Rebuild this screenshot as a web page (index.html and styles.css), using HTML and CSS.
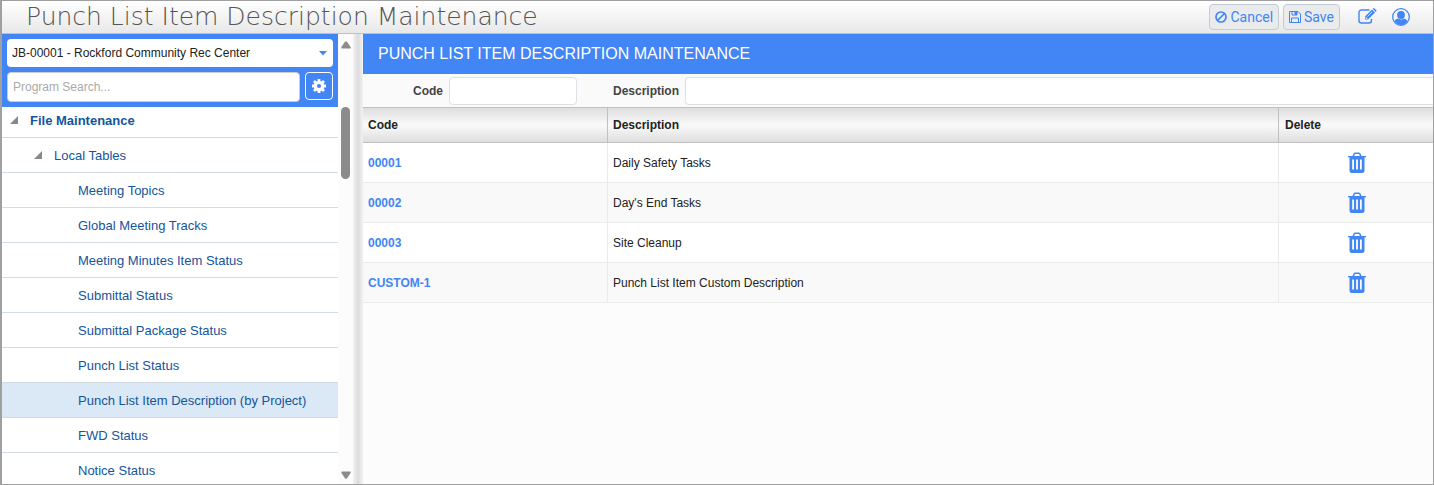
FILE: index.html
```html
<!DOCTYPE html>
<html lang="en">
<head>
    <meta charset="UTF-8">
    <meta name="viewport" content="width=device-width, initial-scale=1.0">
    <title>Punch List Item Description Maintenance</title>
    <link rel="stylesheet" href="styles.css">
</head>
<body>
    <svg class="sprite" aria-hidden="true">
        <symbol id="trash" viewBox="0 0 20 22">
            <path fill="currentColor" fill-rule="evenodd" d="M1 4h4.500l.8-2Q6.800.5 8 .5h4q1.200 0 1.700 1.500l.8 2H19v1.300h-1.500V18.500q0 2.500-2.500 2.500H5q-2.500 0-2.500-2.500V5.300H1zM7.200 4h5.600l-.7-1.900H7.900zM5.200 7.500v10h1.800v-10zM9.100 7.500v10h1.800v-10zM13 7.500v10h1.800v-10z"/>
        </symbol>
    </svg>

    <header class="topbar">
        <h1>Punch List Item Description Maintenance</h1>
        <div class="actions">
            <button class="btn">
                <svg width="12" height="12" viewBox="0 0 12 12" fill="none" stroke="currentColor" stroke-width="1.700"><circle cx="6" cy="6" r="5"/><path d="M9.500 2.500l-7 7"/></svg>
                Cancel
            </button>
            <button class="btn">
                <svg width="12" height="12" viewBox="0 0 12 12" fill="none" stroke="currentColor"><path d="M.5.5h8.500l2.500 2.500v8.500H.5zM2.500 11.500V7h7v4.500M3 .5v3.500h5V.5"/><path d="M6 1h1.500v2.500H6z" fill="currentColor"/></svg>
                Save
            </button>
            <button class="icon-btn edit" aria-label="Edit">
                <svg width="19" height="18" viewBox="0 0 19 18" fill="none" stroke="currentColor" stroke-width="1.400"><path d="M11.500 2H3.500Q1 2 1 4.500v8Q1 15 3.500 15H11q2.500 0 2.500-2.500V11"/><path d="M7 8.500L14 1.500l3 3L10 11.500H7z" fill="currentColor" stroke="none"/><path d="M14.700.8l.6-.5q.6-.5 1.200.1l1.700 1.700q.6.600.1 1.200l-.6.600z" fill="currentColor" stroke="none"/><path d="M9.500 8.500L14 4M8 9v1.500h1.500" stroke="#f4f4f4" stroke-width=".8"/></svg>
            </button>
            <button class="icon-btn" aria-label="Account">
                <svg width="18" height="18" viewBox="0 0 18 18"><circle cx="9" cy="9" r="8.300" fill="none" stroke="currentColor" stroke-width="1.300"/><ellipse cx="9" cy="7" rx="3.900" ry="4" fill="currentColor"/><path d="M2.500 13q1.200-2.300 3.700-2.400 2.800 2 5.600 0 2.500.1 3.700 2.400Q13.200 17 9 17t-6.500-4z" fill="currentColor"/></svg>
            </button>
        </div>
    </header>

    <div class="layout">
        <aside class="sidebar">
            <div class="picker">
                <div class="project">
                    <select aria-label="Project">
                        <option>JB-00001 - Rockford Community Rec Center</option>
                    </select>
                    <svg class="caret" width="8" height="5" viewBox="0 0 8 5"><path d="M0 0h8L4 4.500z" fill="#4285f4"/></svg>
                </div>
                <div class="search">
                    <input type="text" placeholder="Program Search..." aria-label="Program search">
                    <button class="gear" aria-label="Settings">
                        <svg width="14" height="14" viewBox="0 0 14 14"><circle cx="7" cy="7" r="3.700" fill="none" stroke="#fff" stroke-width="3.200"/><path d="M7 0v3M7 11v3M0 7h3M11 7h3M2 2l2.200 2.200M9.800 9.800L12 12M12 2L9.800 4.200M4.200 9.800L2 12" stroke="#fff" stroke-width="2.800"/></svg>
                    </button>
                </div>
            </div>
            <nav>
                <ul class="tree">
                    <li class="root"><a href="#"><i class="arrow"></i>File Maintenance</a></li>
                    <li class="group"><a href="#"><i class="arrow"></i>Local Tables</a></li>
                    <li><a href="#">Meeting Topics</a></li>
                    <li><a href="#">Global Meeting Tracks</a></li>
                    <li><a href="#">Meeting Minutes Item Status</a></li>
                    <li><a href="#">Submittal Status</a></li>
                    <li><a href="#">Submittal Package Status</a></li>
                    <li><a href="#">Punch List Status</a></li>
                    <li class="selected"><a href="#">Punch List Item Description (by Project)</a></li>
                    <li><a href="#">FWD Status</a></li>
                    <li><a href="#">Notice Status</a></li>
                </ul>
            </nav>
        </aside>
        <div class="scrollbar">
            <svg width="10" height="8" viewBox="0 0 10 8"><path d="M4 .8q1-1 2 0l3.600 5.200Q10 7.500 9 7.500H1Q0 7.500.4 6z" fill="#8b8b8b"/></svg>
            <div class="thumb"></div>
            <svg width="10" height="8" viewBox="0 0 10 8"><path d="M4 7.200q1 1 2 0L9.600 2Q10 .5 9 .5H1Q0 .5.4 2z" fill="#8b8b8b"/></svg>
        </div>
        <div class="splitter"></div>

        <main>
            <h2>PUNCH LIST ITEM DESCRIPTION MAINTENANCE</h2>
            <form class="filters">
                <label class="code-label" for="code">Code</label>
                <input type="text" id="code">
                <label class="desc-label" for="description">Description</label>
                <input type="text" id="description">
            </form>
            <table>
                <thead>
                    <tr><th class="col-code">Code</th><th>Description</th><th class="col-delete">Delete</th></tr>
                </thead>
                <tbody>
                    <tr>
                        <td><a href="#">00001</a></td><td>Daily Safety Tasks</td>
                        <td class="del"><button aria-label="Delete 00001"><svg width="20" height="22"><use href="#trash"/></svg></button></td>
                    </tr>
                    <tr>
                        <td><a href="#">00002</a></td><td>Day's End Tasks</td>
                        <td class="del"><button aria-label="Delete 00002"><svg width="20" height="22"><use href="#trash"/></svg></button></td>
                    </tr>
                    <tr>
                        <td><a href="#">00003</a></td><td>Site Cleanup</td>
                        <td class="del"><button aria-label="Delete 00003"><svg width="20" height="22"><use href="#trash"/></svg></button></td>
                    </tr>
                    <tr>
                        <td><a href="#">CUSTOM-1</a></td><td>Punch List Item Custom Description</td>
                        <td class="del"><button aria-label="Delete CUSTOM-1"><svg width="20" height="22"><use href="#trash"/></svg></button></td>
                    </tr>
                </tbody>
            </table>
        </main>
    </div>
</body>
</html>
```

FILE: styles.css
```css
* {
    box-sizing: border-box;
}
body {
    margin: 0;
    height: 100vh;
    display: flex;
    flex-direction: column;
    overflow: hidden;
    border: 1px solid #a0a0a0;
    border-left-width: 2px;
    background: #fcfcfc;
    color: #222;
    font-family: "Liberation Sans", Arial, sans-serif;
    font-size: 12px;
}
input, select, button {
    font-family: inherit;
    font-size: 12px;
}
a {
    text-decoration: none;
}
.sprite {
    display: none;
}

/* top bar */
.topbar {
    flex: none;
    display: flex;
    align-items: center;
    justify-content: space-between;
    height: 33px;
    padding: 0 23px 0 24px;
    border-bottom: 1px solid #c0c0c0;
    background: linear-gradient(#fff, #e8e8e8);
}
h1 {
    margin: 0;
    color: #555;
    font-family: "DejaVu Sans", sans-serif;
    font-size: 25px;
    font-weight: 200;
    line-height: 30px;
}
.actions {
    display: flex;
    align-items: center;
    gap: 4px;
}
.btn {
    display: flex;
    align-items: center;
    gap: 3px;
    height: 26px;
    padding: 0 5px;
    border: 1px solid #c3ccd5;
    border-radius: 4px;
    background: #e9ebed;
    color: #4285f4;
    font-family: Roboto, sans-serif;
    font-size: 14px;
}
.icon-btn {
    display: flex;
    padding: 0;
    border: none;
    background: none;
    color: #4285f4;
}
.edit {
    margin: 0 11px 0 14px;
}

/* sidebar */
.layout {
    flex: 1;
    display: flex;
    min-height: 0;
}
.sidebar {
    flex: none;
    width: 336px;
    overflow: hidden;
    background: #fff;
}
.picker {
    padding: 5px;
    background: #4285f4;
}
.project {
    position: relative;
    margin-bottom: 5px;
}
.project select {
    display: block;
    width: 100%;
    height: 28px;
    padding: 0 5px;
    border: none;
    border-radius: 4px;
    appearance: none;
    background: #fff;
    color: #222;
}
.caret {
    position: absolute;
    right: 6px;
    top: 12px;
}
.search {
    display: flex;
    gap: 5px;
}
.search input {
    flex: 1;
    height: 30px;
    padding: 0 5px;
    border: 1px solid #ccc;
    border-radius: 4px;
}
.search input::placeholder {
    color: #aaa;
}
.gear {
    display: flex;
    align-items: center;
    justify-content: center;
    width: 28px;
    height: 28px;
    padding: 0;
    border: 1px solid #fff;
    border-radius: 4px;
    background: none;
}
.tree {
    margin: 0;
    padding: 0;
    list-style: none;
}
.tree li {
    border-bottom: 1px solid #d3dce4;
}
.tree a {
    display: flex;
    align-items: center;
    height: 34px;
    padding-left: 76px;
    color: #14559b;
    font-size: 13px;
}
.tree .root a {
    height: 30px;
    padding: 0 0 4px 8px;
    font-weight: bold;
}
.tree .group a {
    padding-left: 32px;
}
.tree .selected {
    background: #dbe8f6;
}
.arrow {
    width: 8px;
    height: 8px;
    margin-right: 12px;
    background: #888;
    clip-path: polygon(100% 0, 100% 100%, 0 100%);
}

/* scrollbar and splitter */
.scrollbar {
    flex: none;
    display: flex;
    flex-direction: column;
    align-items: center;
    width: 15px;
    padding: 7px 0 5px;
    background: #fcfcfc;
}
.thumb {
    width: 9px;
    height: 72px;
    margin: 58px 0 auto;
    border-radius: 5px;
    background: #8b8b8b;
}
.splitter {
    flex: none;
    width: 10px;
    background: linear-gradient(to right, #f2f2f2, #dcdcdc 50%, #f2f2f2);
}

/* main panel */
main {
    flex: 1;
    min-width: 0;
}
h2 {
    margin: 0;
    padding-left: 15px;
    background: #4285f4;
    color: #fff;
    font-size: 16px;
    font-weight: normal;
    line-height: 40px;
}
.filters {
    display: flex;
    align-items: center;
    height: 33px;
    background: #fafafa;
    overflow: hidden;
}
.filters label {
    color: #444;
    font-weight: bold;
    text-align: right;
}
.filters input {
    height: 28px;
    margin-left: 6px;
    border: 1px solid #dde1e6;
    border-radius: 4px;
    background: #fff;
}
.code-label {
    width: 80px;
}
.desc-label {
    width: 102px;
}
#code {
    width: 128px;
}
#description {
    flex: 1;
    border-right: none;
    border-radius: 4px 0 0 4px;
}
table {
    width: 100%;
    border-collapse: separate;
    border-spacing: 0;
    table-layout: fixed;
}
th {
    height: 36px;
    padding: 0 5px;
    border: solid #c0c0c0;
    border-width: 1px 1px 1px 0;
    background: linear-gradient(#dedede, #fafafa 50%, #dedede);
    font-weight: bold;
    text-align: left;
}
td {
    height: 40px;
    padding: 0 5px;
    border: solid #ebebeb;
    border-width: 0 1px 1px 0;
    background: #fff;
}
th:last-child, td:last-child {
    padding: 0 4px 0 6px;
    border-right: none;
}
tr:nth-child(even) td {
    background: #f9f9f9;
}
.col-code {
    width: 245px;
}
.col-delete {
    width: 154px;
}
td a {
    color: #4285f4;
    font-weight: bold;
}
.del {
    text-align: center;
}
.del button {
    padding: 0;
    border: none;
    background: none;
    color: #4285f4;
    vertical-align: middle;
}
.del svg {
    display: block;
}
```
